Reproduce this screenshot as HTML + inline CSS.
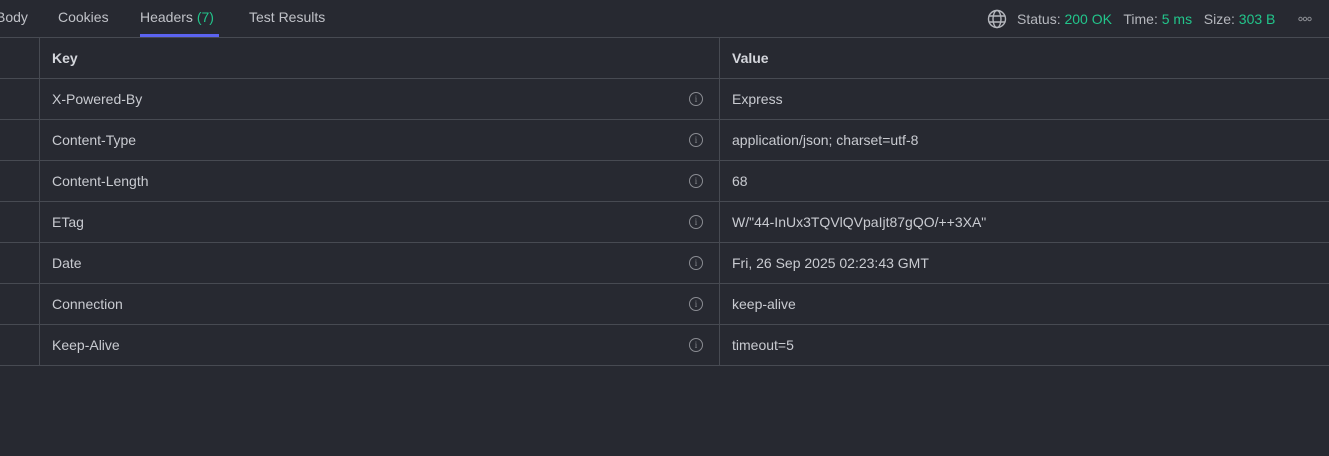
<!DOCTYPE html>
<html><head><style>
body{margin:0;width:1329px;height:456px;background:#272931;font-family:"Liberation Sans",sans-serif;font-size:14px;color:#c9cbd1;overflow:hidden;position:relative}
.tabs{position:absolute;left:0;top:0;width:1329px;height:37px;border-bottom:1px solid #474a52}
.tab{position:absolute;top:9px;color:#c0c2c8}
.ul{position:absolute;left:140px;top:34px;width:79px;height:3px;background:#5b63f0}
.g{color:#22c58b}
.stat{position:absolute;top:11px;left:1017px;color:#b5b7bd}
.row{position:absolute;left:0;width:1329px;height:40px;border-bottom:1px solid #474a52}
.row span{position:absolute;top:12px}
.k{left:52px}.v{left:732px}
.vl{position:absolute;top:38px;width:1px;height:327px;background:#474a52}
.i{position:absolute;left:689px;top:13px;width:12px;height:12px;border:1px solid #8a8c92;border-radius:50%;font-size:9px;color:#8a8c92;text-align:center;line-height:12px;font-family:"Liberation Serif",serif}
</style></head><body>
<div class="tabs">
<div class="tab" style="left:-4px">Body</div>
<div class="tab" style="left:58px">Cookies</div>
<div class="tab" style="left:140px">Headers <span class="g">(7)</span></div>
<div class="tab" style="left:249px">Test Results</div>
<div class="ul"></div>
<svg style="position:absolute;left:987px;top:9px" width="20" height="20" viewBox="0 0 20 20" fill="none" stroke="#b5b7bd" stroke-width="1.4"><circle cx="10" cy="10" r="8.5"/><ellipse cx="10" cy="10" rx="4" ry="8.5"/><line x1="1.5" y1="7" x2="18.5" y2="7"/><line x1="1.5" y1="13" x2="18.5" y2="13"/></svg>
<div class="stat">Status: <span class="g">200 OK</span>&nbsp;&nbsp; Time: <span class="g">5 ms</span>&nbsp;&nbsp; Size: <span class="g">303 B</span></div>
<svg style="position:absolute;left:1298px;top:16px" width="14" height="6" viewBox="0 0 14 6" fill="none" stroke="#8a8c92" stroke-width="1"><circle cx="2.5" cy="3" r="1.7"/><circle cx="7" cy="3" r="1.7"/><circle cx="11.5" cy="3" r="1.7"/></svg>
</div>
<div class="row" style="top:38px"><span class="k" style="font-weight:bold;color:#d4d6dc">Key</span><span class="v" style="font-weight:bold;color:#d4d6dc">Value</span></div>
<div class="row" style="top:79px"><span class="k">X-Powered-By</span><div class="i">i</div><span class="v">Express</span></div>
<div class="row" style="top:120px"><span class="k">Content-Type</span><div class="i">i</div><span class="v">application/json; charset=utf-8</span></div>
<div class="row" style="top:161px"><span class="k">Content-Length</span><div class="i">i</div><span class="v">68</span></div>
<div class="row" style="top:202px"><span class="k">ETag</span><div class="i">i</div><span class="v">W/"44-InUx3TQVlQVpaIjt87gQO/++3XA"</span></div>
<div class="row" style="top:243px"><span class="k">Date</span><div class="i">i</div><span class="v">Fri, 26 Sep 2025 02:23:43 GMT</span></div>
<div class="row" style="top:284px"><span class="k">Connection</span><div class="i">i</div><span class="v">keep-alive</span></div>
<div class="row" style="top:325px"><span class="k">Keep-Alive</span><div class="i">i</div><span class="v">timeout=5</span></div>
<div class="vl" style="left:39px"></div>
<div class="vl" style="left:719px"></div>
</body></html>
